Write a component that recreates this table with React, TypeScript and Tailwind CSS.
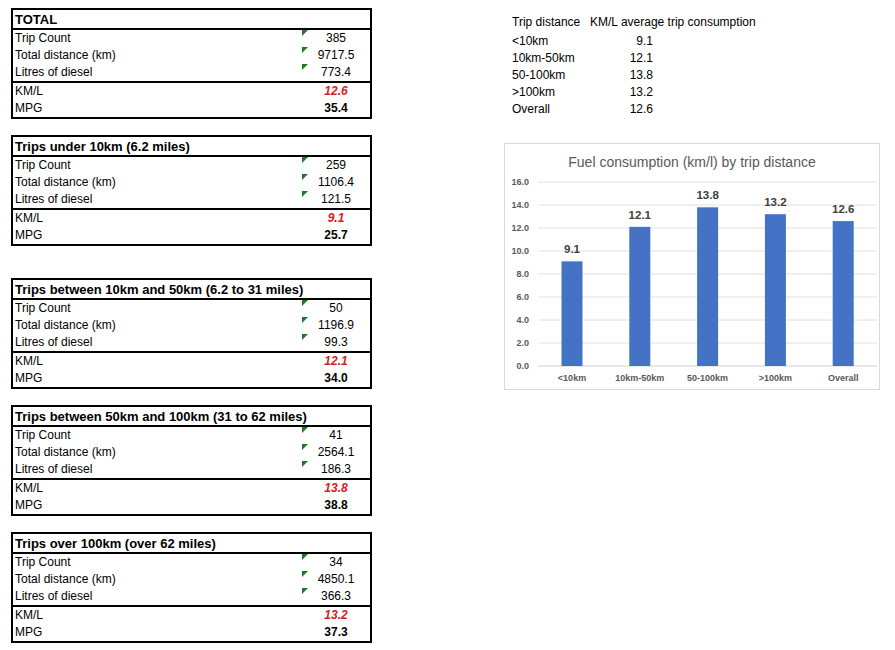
import React from 'react';

type Block = {
  title: string;
  tripCount: string;
  distance: string;
  litres: string;
  kml: string;
  mpg: string;
};

const blocks: Block[] = [
  { title: 'TOTAL', tripCount: '385', distance: '9717.5', litres: '773.4', kml: '12.6', mpg: '35.4' },
  { title: 'Trips under 10km (6.2 miles)', tripCount: '259', distance: '1106.4', litres: '121.5', kml: '9.1', mpg: '25.7' },
  { title: 'Trips between 10km and 50km (6.2 to 31 miles)', tripCount: '50', distance: '1196.9', litres: '99.3', kml: '12.1', mpg: '34.0' },
  { title: 'Trips between 50km and 100km (31 to 62 miles)', tripCount: '41', distance: '2564.1', litres: '186.3', kml: '13.8', mpg: '38.8' },
  { title: 'Trips over 100km (over 62 miles)', tripCount: '34', distance: '4850.1', litres: '366.3', kml: '13.2', mpg: '37.3' },
];

const summary = [
  { label: '<10km', value: '9.1', v: 9.1 },
  { label: '10km-50km', value: '12.1', v: 12.1 },
  { label: '50-100km', value: '13.8', v: 13.8 },
  { label: '>100km', value: '13.2', v: 13.2 },
  { label: 'Overall', value: '12.6', v: 12.6 },
];

const Marker = () => (
  <svg className="absolute left-0 top-0" width="6" height="6" viewBox="0 0 6 6">
    <polygon points="0,0 6,0 0,6" fill="#1f7a1f" />
  </svg>
);

const Row = ({ label, value, flagged, className }: { label: string; value: string; flagged?: boolean; className?: string }) => (
  <div className="flex h-[17px] items-center">
    <div className="w-[289px] pl-[2px]">{label}</div>
    <div className="relative flex h-full w-[68px] items-center justify-center">
      {flagged && <Marker />}
      <span className={className}>{value}</span>
    </div>
  </div>
);

const StatsTable = ({ block }: { block: Block }) => (
  <div className="w-[361px] border-2 border-black text-[12px] leading-[17px] text-black">
    <div className="flex h-[20px] items-center border-b-2 border-black pl-[2px] text-[13px] font-bold">
      {block.title}
    </div>
    <div className="border-b-2 border-black">
      <Row label="Trip Count" value={block.tripCount} flagged />
      <Row label="Total distance (km)" value={block.distance} flagged />
      <Row label="Litres of diesel" value={block.litres} flagged />
    </div>
    <Row label="KM/L" value={block.kml} className="font-bold italic text-[#d91c1c]" />
    <Row label="MPG" value={block.mpg} className="font-bold" />
  </div>
);

const Chart = () => {
  const y = (v: number) => 192 - v * 11.5;
  const ticks = [0, 2, 4, 6, 8, 10, 12, 14, 16];
  return (
    <div className="h-[247px] w-[376px] border border-[#d9d9d9] bg-white">
      <div className="h-[30px] pt-[9px] text-center text-[14px] leading-[18px] text-[#595959]">
        Fuel consumption (km/l) by trip distance
      </div>
      <svg width="374" height="215" viewBox="0 0 374 215" fontFamily="'Liberation Sans', Arial, sans-serif">
        {ticks.map(t => (
          <g key={t}>
            <line x1="33" x2="372" y1={y(t)} y2={y(t)} stroke={t === 0 ? '#d0d0d0' : '#e0e0e0'} strokeWidth="1" />
            <text x="24" y={y(t) + 3} textAnchor="end" fontSize="9" fontWeight="bold" fill="#595959">
              {t.toFixed(1)}
            </text>
          </g>
        ))}
        {summary.map((s, i) => {
          const cx = 67 + i * 67.8;
          return (
            <g key={s.label}>
              <rect x={cx - 10.5} y={y(s.v)} width="21" height={s.v * 11.5} fill="#4472c4" />
              <text x={cx} y={y(s.v) - 8} textAnchor="middle" fontSize="11.5" fontWeight="bold" fill="#404040">
                {s.value}
              </text>
              <text x={cx} y="207" textAnchor="middle" fontSize="9" fontWeight="bold" fill="#595959">
                {s.label}
              </text>
            </g>
          );
        })}
      </svg>
    </div>
  );
};

export default function App() {
  return (
    <div className="flex h-[650px] w-[895px] bg-white font-['Liberation_Sans',Arial,sans-serif] text-black">
      <div className="flex flex-col gap-[16px] pl-[11px] pt-[8px]">
        {blocks.map((b, i) => (
          <div key={b.title} className={i === 2 ? 'mt-[16px]' : ''}>
            <StatsTable block={b} />
          </div>
        ))}
      </div>
      <div className="ml-[132px] flex flex-col">
        <div className="pl-[8px] pt-[12px] text-[12px]">
          <div className="flex h-[20px] items-center">
            <div className="w-[78px]">Trip distance</div>
            <div className="whitespace-nowrap">KM/L average trip consumption</div>
          </div>
          {summary.map(s => (
            <div key={s.label} className="flex h-[17px] items-center">
              <div className="w-[78px]">{s.label}</div>
              <div className="w-[63px] text-right">{s.value}</div>
            </div>
          ))}
        </div>
        <div className="mt-[26px]">
          <Chart />
        </div>
      </div>
    </div>
  );
}
